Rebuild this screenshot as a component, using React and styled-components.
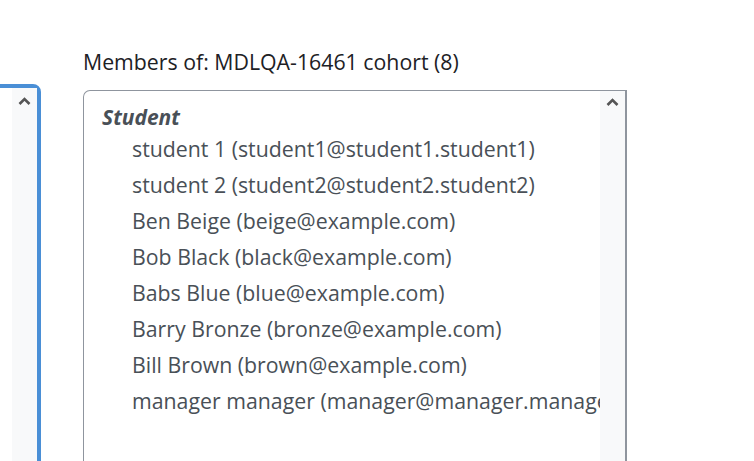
import React from 'react'
import styled, {createGlobalStyle} from 'styled-components'

const Global = createGlobalStyle`
    html, body {
        margin: 0;
        padding: 0;
        background: #fff;
        overflow: hidden;
    }
    body {
        font-family: 'Open Sans', 'Noto Sans', sans-serif;
        color: #1d2125;
    }
`
const Page = styled.div`
    width: 754px;
    height: 461px;
    display: flex;
    flex-direction: row;
    overflow: hidden;
`
const LeftCol = styled.div`
    width: 41px;
    padding-top: 84px;
    overflow: hidden;
    flex-shrink: 0;
`
const FocusedBox = styled.div`
    width: 300px;
    height: 440px;
    margin-left: -267px;
    border: 4px solid #4a8fd6;
    border-radius: 0 8px 0 0;
    display: flex;
    justify-content: flex-end;
    background: #fff;
`
const RightCol = styled.div`
    margin-left: 42px;
    padding-top: 48px;
    display: flex;
    flex-direction: column;
`
const Label = styled.div`
    font-size: 21.3px;
    line-height: 28px;
    height: 28px;
    color: #1d2125;
    margin-bottom: 14px;
`
const ListBox = styled.div`
    width: 541px;
    height: 420px;
    flex-shrink: 0;
    border: 1px solid #8f959e;
    border-right-width: 2px;
    border-radius: 7px 0 0 0;
    display: flex;
    overflow: hidden;
`
const Options = styled.div`
    flex: 1;
    min-width: 0;
    padding: 12px 0 0 18px;
    overflow: hidden;
`
const Group = styled.div`
    font-size: 21px;
    line-height: 28px;
    font-weight: 700;
    font-style: italic;
    color: #495057;
`
const Option = styled.div`
    font-size: 21.3px;
    line-height: 36px;
    padding-left: 30px;
    color: #495057;
    white-space: nowrap;
    overflow: hidden;
`
const Scrollbar = styled.div`
    width: ${p => p.$w}px;
    flex-shrink: 0;
    background: #f8f9fa;
    display: flex;
    justify-content: center;
    padding-top: ${p => p.$top}px;
    box-sizing: border-box;
`

const Chevron = () => (
    <svg width="13" height="8" viewBox="0 0 13 8">
        <path d="M1.5 7 L6.5 2 L11.5 7" fill="none" stroke="#555" strokeWidth="2.6" />
    </svg>
)

const members = [
    'student 1 (student1@student1.student1)',
    'student 2 (student2@student2.student2)',
    'Ben Beige (beige@example.com)',
    'Bob Black (black@example.com)',
    'Babs Blue (blue@example.com)',
    'Barry Bronze (bronze@example.com)',
    'Bill Brown (brown@example.com)',
    'manager manager (manager@manager.manager)',
]

const App = () => (
    <Page>
        <Global />
        <LeftCol>
            <FocusedBox>
                <Scrollbar $w={25} $top={9}><Chevron /></Scrollbar>
            </FocusedBox>
        </LeftCol>
        <RightCol>
            <Label>Members of: MDLQA-16461 cohort (8)</Label>
            <ListBox>
                <Options>
                    <Group>Student</Group>
                    {members.map(m => <Option key={m}>{m}</Option>)}
                </Options>
                <Scrollbar $w={25} $top={7}><Chevron /></Scrollbar>
            </ListBox>
        </RightCol>
    </Page>
)

export default App
